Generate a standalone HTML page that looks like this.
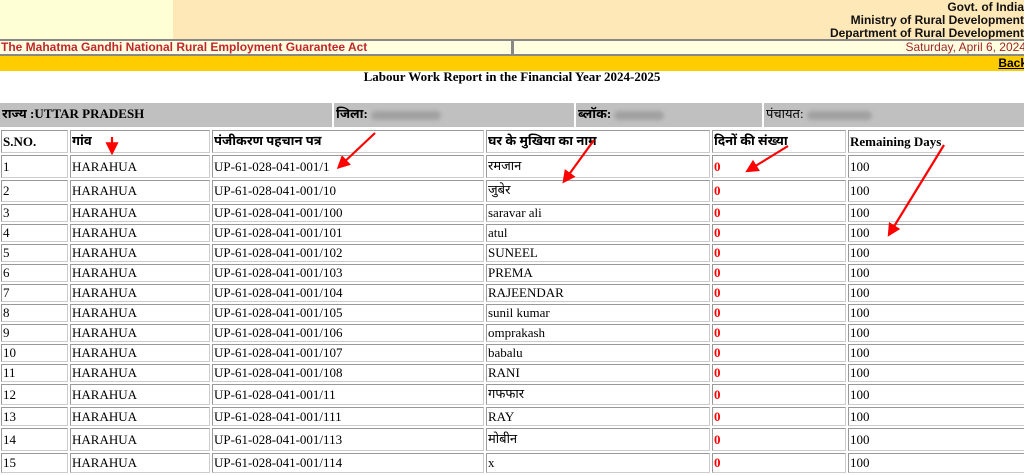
<!DOCTYPE html>
<html><head><meta charset="utf-8"><style>
body{margin:0;width:1024px;height:459px;overflow:hidden;background:#fff;position:relative;font-family:"Liberation Serif","Noto Sans Devanagari","Lohit Devanagari",serif;}
.a{position:absolute}
.hl{left:0;top:0;width:173px;height:39px;background:#ffffd6}
.hr{left:173px;top:0;width:851px;height:39px;background:#ffe8b8;font:bold 12px "Liberation Sans",sans-serif;text-align:right;line-height:13px;padding-top:1px;box-sizing:border-box;color:#111;margin-right:-2px}
.bar{left:0;top:39px;width:1024px;height:17px;background:#888}
.b1{left:0;top:41px;width:510px;height:13px;background:#ffffdf;color:#c0272d;font:bold 12px "Liberation Sans",sans-serif;line-height:13px;padding-left:1px}
.b2{left:514px;top:41px;width:512px;height:13px;background:#ffffdf;color:#a0262a;font:12px "Liberation Sans",sans-serif;line-height:13px;text-align:right}
.y{left:0;top:56px;width:1024px;height:15px;background:#ffcc00;font:bold 12px "Liberation Sans",sans-serif;text-align:right;line-height:15px}
.t{left:0;top:69px;width:1024px;text-align:center;font:bold 13px "Liberation Serif",serif}
.inf{top:103px;height:24px;background:#c0c0c0;font-size:13px;line-height:22px;padding-left:2px;box-sizing:border-box;font-weight:bold}
.blur{display:inline-block;height:9px;background:#999;border-radius:5px;vertical-align:middle;filter:blur(2px);opacity:.8}
table{position:absolute;left:-1px;top:128px;border-collapse:separate;border-spacing:2px;table-layout:fixed;width:1034px}
td{border:1px solid;border-color:#999 #ccc #ccc #999;padding:0 1px;font-size:13px;white-space:nowrap;overflow:hidden;color:#000}
th{border:1px solid;border-color:#999 #ccc #ccc #999;padding:0 1px;font-size:13px;text-align:left;font-weight:bold}
.r{color:#f00;font-weight:bold}
</style></head><body>
<div class="a hl"></div>
<div class="a hr">Govt. of India<br>Ministry of Rural Development<br>Department of Rural Development</div>
<div class="a bar"></div>
<div class="a b1">The Mahatma Gandhi National Rural Employment Guarantee Act</div>
<div class="a b2">Saturday, April 6, 2024</div>
<div class="a y"><u style="margin-right:-3px">Back</u></div>
<div class="a t">Labour Work Report in the Financial Year 2024-2025</div>
<div class="a inf" style="left:0;width:332px">राज्य :UTTAR PRADESH</div>
<div class="a inf" style="left:334px;width:240px">जिला: <span class="blur" style="width:70px"></span></div>
<div class="a inf" style="left:576px;width:186px">ब्लॉक: <span class="blur" style="width:50px"></span></div>
<div class="a inf" style="left:764px;width:260px;font-weight:normal">पंचायत: <span class="blur" style="width:65px"></span></div>
<table>
<colgroup><col style="width:67px"><col style="width:140px"><col style="width:272px"><col style="width:224px"><col style="width:134px"><col style="width:183px"></colgroup>
<tr style="height:23px"><th>S.NO.</th><th>गांव</th><th>पंजीकरण पहचान पत्र</th><th>घर के मुखिया का नाम</th><th>दिनों की संख्या</th><th>Remaining Days</th></tr>
<tr style="height:23px"><td>1</td><td>HARAHUA</td><td>UP-61-028-041-001/1</td><td>रमजान</td><td class="r">0</td><td>100</td></tr>
<tr style="height:22px"><td>2</td><td>HARAHUA</td><td>UP-61-028-041-001/10</td><td>जुबेर</td><td class="r">0</td><td>100</td></tr>
<tr style="height:18px"><td>3</td><td>HARAHUA</td><td>UP-61-028-041-001/100</td><td>saravar ali</td><td class="r">0</td><td>100</td></tr>
<tr style="height:18px"><td>4</td><td>HARAHUA</td><td>UP-61-028-041-001/101</td><td>atul</td><td class="r">0</td><td>100</td></tr>
<tr style="height:18px"><td>5</td><td>HARAHUA</td><td>UP-61-028-041-001/102</td><td>SUNEEL</td><td class="r">0</td><td>100</td></tr>
<tr style="height:18px"><td>6</td><td>HARAHUA</td><td>UP-61-028-041-001/103</td><td>PREMA</td><td class="r">0</td><td>100</td></tr>
<tr style="height:18px"><td>7</td><td>HARAHUA</td><td>UP-61-028-041-001/104</td><td>RAJEENDAR</td><td class="r">0</td><td>100</td></tr>
<tr style="height:18px"><td>8</td><td>HARAHUA</td><td>UP-61-028-041-001/105</td><td>sunil kumar</td><td class="r">0</td><td>100</td></tr>
<tr style="height:18px"><td>9</td><td>HARAHUA</td><td>UP-61-028-041-001/106</td><td>omprakash</td><td class="r">0</td><td>100</td></tr>
<tr style="height:18px"><td>10</td><td>HARAHUA</td><td>UP-61-028-041-001/107</td><td>babalu</td><td class="r">0</td><td>100</td></tr>
<tr style="height:18px"><td>11</td><td>HARAHUA</td><td>UP-61-028-041-001/108</td><td>RANI</td><td class="r">0</td><td>100</td></tr>
<tr style="height:21px"><td>12</td><td>HARAHUA</td><td>UP-61-028-041-001/11</td><td>गफफार</td><td class="r">0</td><td>100</td></tr>
<tr style="height:19px"><td>13</td><td>HARAHUA</td><td>UP-61-028-041-001/111</td><td>RAY</td><td class="r">0</td><td>100</td></tr>
<tr style="height:23px"><td>14</td><td>HARAHUA</td><td>UP-61-028-041-001/113</td><td>मोबीन</td><td class="r">0</td><td>100</td></tr>
<tr style="height:20px"><td>15</td><td>HARAHUA</td><td>UP-61-028-041-001/114</td><td>x</td><td class="r">0</td><td>100</td></tr>
</table>
<svg class="a" style="left:0;top:0" width="1024" height="459">
<defs><marker id="m" markerWidth="6" markerHeight="6" refX="4" refY="3" orient="auto"><path d="M0,0L6,3L0,6z" fill="#f00"/></marker></defs>
<g stroke="#f00" stroke-width="2.2" fill="none" marker-end="url(#m)">
<line x1="112" y1="137" x2="112" y2="151"/>
<line x1="375" y1="133" x2="340" y2="166"/>
<line x1="594" y1="140" x2="565" y2="180"/>
<line x1="788" y1="146" x2="749" y2="170"/>
<line x1="944" y1="145" x2="890" y2="233"/>
</g></svg>
</body></html>
